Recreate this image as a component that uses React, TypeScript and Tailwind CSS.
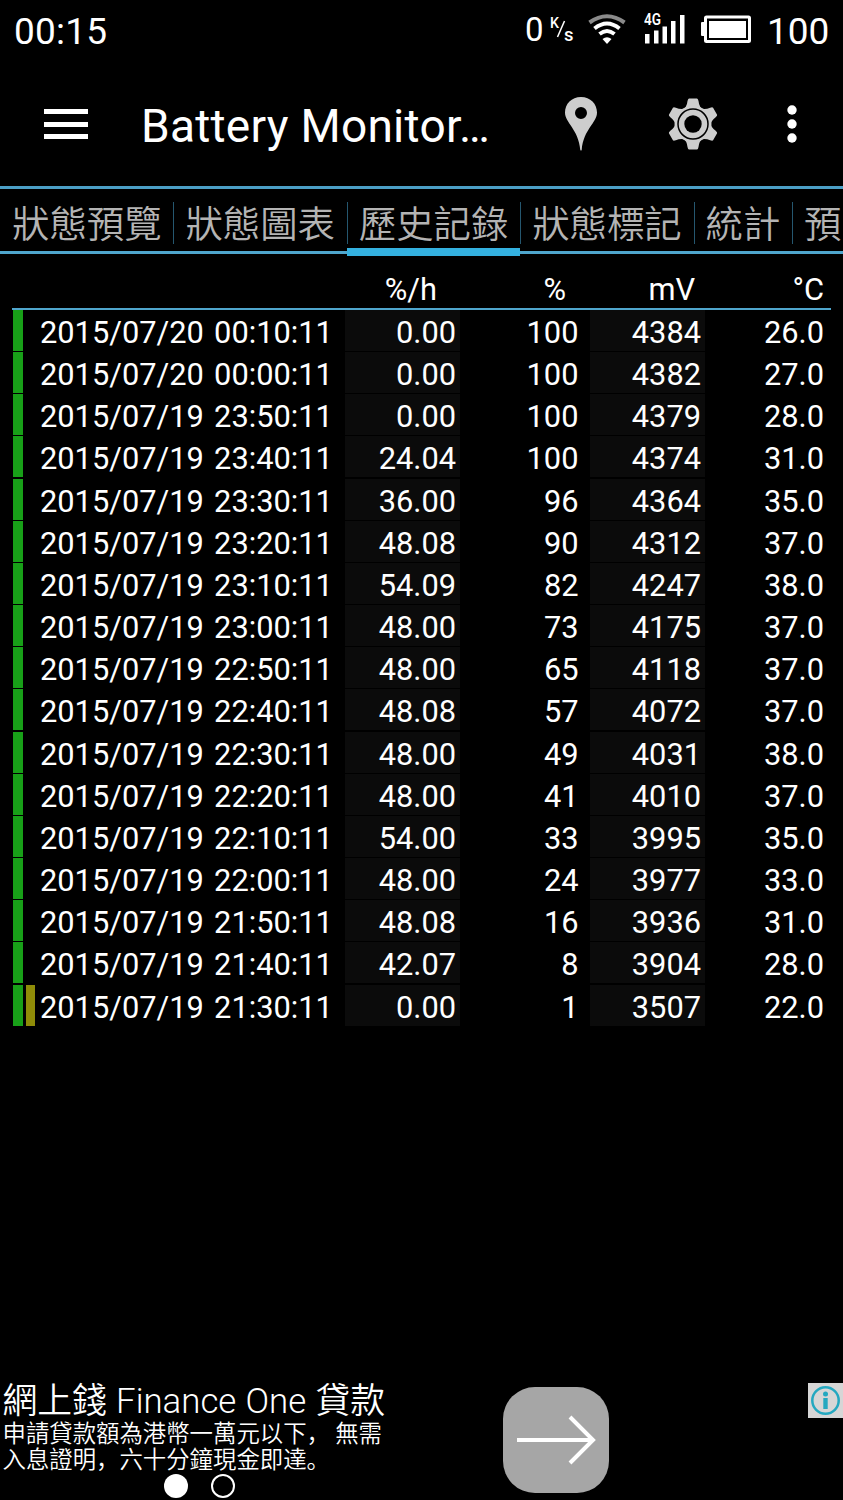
import React from 'react';

type Reading = {
  time: string;
  rate: string;
  level: string;
  voltage: string;
  temp: string;
  marked?: boolean;
};

const readings: Reading[] = [
  { time: '2015/07/20 00:10:11', rate: '0.00', level: '100', voltage: '4384', temp: '26.0' },
  { time: '2015/07/20 00:00:11', rate: '0.00', level: '100', voltage: '4382', temp: '27.0' },
  { time: '2015/07/19 23:50:11', rate: '0.00', level: '100', voltage: '4379', temp: '28.0' },
  { time: '2015/07/19 23:40:11', rate: '24.04', level: '100', voltage: '4374', temp: '31.0' },
  { time: '2015/07/19 23:30:11', rate: '36.00', level: '96', voltage: '4364', temp: '35.0' },
  { time: '2015/07/19 23:20:11', rate: '48.08', level: '90', voltage: '4312', temp: '37.0' },
  { time: '2015/07/19 23:10:11', rate: '54.09', level: '82', voltage: '4247', temp: '38.0' },
  { time: '2015/07/19 23:00:11', rate: '48.00', level: '73', voltage: '4175', temp: '37.0' },
  { time: '2015/07/19 22:50:11', rate: '48.00', level: '65', voltage: '4118', temp: '37.0' },
  { time: '2015/07/19 22:40:11', rate: '48.08', level: '57', voltage: '4072', temp: '37.0' },
  { time: '2015/07/19 22:30:11', rate: '48.00', level: '49', voltage: '4031', temp: '38.0' },
  { time: '2015/07/19 22:20:11', rate: '48.00', level: '41', voltage: '4010', temp: '37.0' },
  { time: '2015/07/19 22:10:11', rate: '54.00', level: '33', voltage: '3995', temp: '35.0' },
  { time: '2015/07/19 22:00:11', rate: '48.00', level: '24', voltage: '3977', temp: '33.0' },
  { time: '2015/07/19 21:50:11', rate: '48.08', level: '16', voltage: '3936', temp: '31.0' },
  { time: '2015/07/19 21:40:11', rate: '42.07', level: '8', voltage: '3904', temp: '28.0' },
  { time: '2015/07/19 21:30:11', rate: '0.00', level: '1', voltage: '3507', temp: '22.0', marked: true },
];

const tabs = ['狀態預覽', '狀態圖表', '歷史記錄', '狀態標記', '統計', '預'];

function StatusBar() {
  return (
    <div className="flex h-[62px] shrink-0 items-start pl-[14px] text-[37px] leading-[63px]">
      <span className="w-[511px] tracking-[0.2px]">00:15</span>
      <span className="w-[25px] text-[33px] leading-[60px]">0</span>
      <svg width="24" height="34" viewBox="0 -4 24 34" className="mt-[10px]" fill="#fff">
        <text x="0" y="13.5" fontSize="14.5" fontWeight="500" textLength="9" lengthAdjust="spacingAndGlyphs">K</text>
        <path d="M7.5 23 L14.5 7" stroke="#fff" strokeWidth="1.5" />
        <text x="14" y="26.8" fontSize="19" fontWeight="500" textLength="9.5" lengthAdjust="spacingAndGlyphs">s</text>
      </svg>
      <svg width="38" height="30" viewBox="0 0 38 30" className="mt-[14px] ml-[14px]" fill="none" stroke="#fff" strokeWidth="4">
        <path d="M1.5 8.5 Q19 -4 36.5 8.5" stroke="#8a8a8a" />
        <path d="M6.5 14.5 Q19 4.5 31.5 14.5" />
        <path d="M11.5 20 Q19 14 26.5 20" />
        <path d="M14.5 25 Q19 21.5 23.5 25 L19 30 Z" fill="#fff" stroke="none" />
      </svg>
      <svg width="42" height="38" viewBox="0 -6 42 38" className="mt-[6px] ml-[18px]" fill="#fff">
        <text x="0" y="13.3" fontSize="17" fontWeight="600" textLength="17" lengthAdjust="spacingAndGlyphs">4G</text>
        <rect x="1" y="22" width="4.5" height="9.5" />
        <rect x="10" y="18.5" width="4.5" height="13" />
        <rect x="18.5" y="14.5" width="4.5" height="17" />
        <rect x="27" y="9" width="4.5" height="22.5" />
        <rect x="36" y="3" width="4.5" height="28.5" />
      </svg>
      <svg width="50" height="30" viewBox="0 0 50 30" className="mt-[14px] ml-[15px]">
        <rect x="0" y="8" width="5" height="14" rx="1" fill="#fff" />
        <rect x="4.5" y="3" width="44" height="24.5" rx="1" fill="none" stroke="#fff" strokeWidth="3" />
        <rect x="8" y="7" width="37" height="17" fill="#fff" />
      </svg>
      <span className="ml-[16px]">100</span>
    </div>
  );
}

function ActionBar() {
  return (
    <header className="flex h-[124px] shrink-0 items-center">
      <div className="ml-[44px] flex w-[97px] flex-col gap-[7.5px]">
        <span className="h-[5px] w-[44px] bg-white" />
        <span className="h-[5px] w-[44px] bg-white" />
        <span className="h-[5px] w-[44px] bg-white" />
      </div>
      <h1 className="w-[423px] pt-[4px] text-[46px] leading-[60px] tracking-[0.27px]">Battery Monitor…</h1>
      <svg width="34" height="54" viewBox="0 0 34 54" fill="#cdcdcd">
        <path fillRule="evenodd" d="M17 0 C7.5 0 1 7 1 15.5 C1 26 14.5 32 16.3 53 Q17 54 17.7 53 C19.5 32 33 26 33 15.5 C33 7 26.5 0 17 0 Z M17 10 A6 6 0 1 1 17 22 A6 6 0 1 1 17 10 Z" />
      </svg>
      <svg width="50" height="52" viewBox="-25 -26 50 52" className="ml-[70px]" fill="#cdcdcd">
        <circle r="18.5" />
        {[0, 60, 120, 180, 240, 300].map((angle) => (
          <path key={angle} transform={`rotate(${angle})`} d="M-11 -13 Q-6 -17 -5.5 -23 Q-5 -25.5 -4 -25.5 H4 Q5 -25.5 5.5 -23 Q6 -17 11 -13 Z" />
        ))}
        <circle r="15" fill="none" stroke="#000" strokeWidth="1.5" />
        <circle r="8.7" fill="#000" />
      </svg>
      <svg width="10" height="40" viewBox="0 0 10 40" className="ml-[68.5px]" fill="#fff">
        <circle cx="5" cy="6" r="4.7" />
        <circle cx="5" cy="20" r="4.7" />
        <circle cx="5" cy="34" r="4.7" />
      </svg>
    </header>
  );
}

function TabStrip() {
  return (
    <nav className="flex h-[70px] shrink-0 overflow-hidden border-t-[3px] border-[#4b9fc6]">
      {tabs.map((tab, i) => (
        <div key={i} className="flex shrink-0 flex-col last:grow">
          <div className="flex h-[59px] items-end">
            <span className="h-[56px] pr-[11.8px] pl-[12px] text-[37.4px] leading-[66px] font-[350] text-[#b4b4b4]">{tab}</span>
            {i < tabs.length - 1 && <span className="-mr-px mb-[4px] h-[42px] w-px bg-[#25576f]" />}
          </div>
          <div className={i === 2 ? 'h-[8px] bg-[#34b1e0]' : 'mt-[3px] h-[3px] bg-[#4fa6cd]'} />
        </div>
      ))}
    </nav>
  );
}

function HistoryTable() {
  return (
    <main className="mr-[12px] ml-[12px] flex flex-col text-[30.8px]">
      <div className="flex h-[54px] border-b-2 border-[#4fa6cd] pt-[14px] leading-[40px]">
        <span className="w-[425px] text-right">%/h</span>
        <span className="w-[129px] text-right">%</span>
        <span className="w-[129px] text-right">mV</span>
        <span className="w-[129px] text-right">°C</span>
      </div>
      {readings.map((r) => (
        <div key={r.time} className="flex h-[42.17px] pl-px leading-[45.4px]">
          <span className="h-[41px] w-[10px] bg-[#18a018]" />
          <span className={r.marked ? 'ml-[3px] h-[41px] w-[9px] bg-[#8f8c08]' : 'ml-[3px] w-[9px]'} />
          <span className="w-[310px] pl-[5px] whitespace-nowrap [word-spacing:2.6px]">{r.time}</span>
          <span className="h-[41px] w-[115px] bg-[#0b0b0b] pr-[4px] text-right">{r.rate}</span>
          <span className="w-[118.5px] text-right">{r.level}</span>
          <span className="ml-[11.5px] h-[41px] w-[115px] bg-[#0b0b0b] pr-[4px] text-right">{r.voltage}</span>
          <span className="w-[119px] text-right">{r.temp}</span>
        </div>
      ))}
    </main>
  );
}

function AdBanner() {
  return (
    <footer className="mt-auto flex h-[122px] shrink-0 items-start">
      <div className="flex w-[503px] flex-col pl-[2.5px] font-[350]">
        <p className="h-[42px] text-[34.8px] leading-[47px] whitespace-nowrap [word-spacing:0.7px]">
          網上錢 <span className="font-light">Finance One</span> 貸款
        </p>
        <p className="text-[23.4px] leading-[25.5px] whitespace-nowrap font-['Noto_Sans_CJK_SC',sans-serif]">
          申請貸款額為港幣一萬元以下， 無需
          <br />
          入息證明，六十分鐘現金即達。
        </p>
        <div className="mt-[3px] ml-[161px] flex gap-[23px]">
          <span className="h-[24px] w-[24px] rounded-full bg-white" />
          <span className="h-[24px] w-[24px] rounded-full border-[2.5px] border-white" />
        </div>
      </div>
      <div className="mt-[9px] h-[106px] w-[106px] rounded-[32px] bg-[#a6a6a6]">
        <svg width="106" height="106" viewBox="0 0 106 106" fill="none" stroke="#fff" strokeWidth="4">
          <path d="M14 53 H89 M67 30 L90 53 L67 76" />
        </svg>
      </div>
      <div className="mt-[5px] ml-auto h-[35px] w-[35px] bg-[#d6d6d6]">
        <svg width="35" height="35" viewBox="0 0 35 35" fill="#24a8c0">
          <circle cx="17.5" cy="17.5" r="13.2" fill="none" stroke="#24a8c0" strokeWidth="2.5" />
          <circle cx="17.5" cy="11" r="2.5" />
          <rect x="15.3" y="15" width="4.4" height="11" />
        </svg>
      </div>
    </footer>
  );
}

export default function App() {
  return (
    <div className="flex h-[1500px] w-[843px] flex-col overflow-hidden bg-black font-[Roboto,'Noto_Sans_CJK_SC',sans-serif] text-white">
      <StatusBar />
      <ActionBar />
      <TabStrip />
      <HistoryTable />
      <AdBanner />
    </div>
  );
}
